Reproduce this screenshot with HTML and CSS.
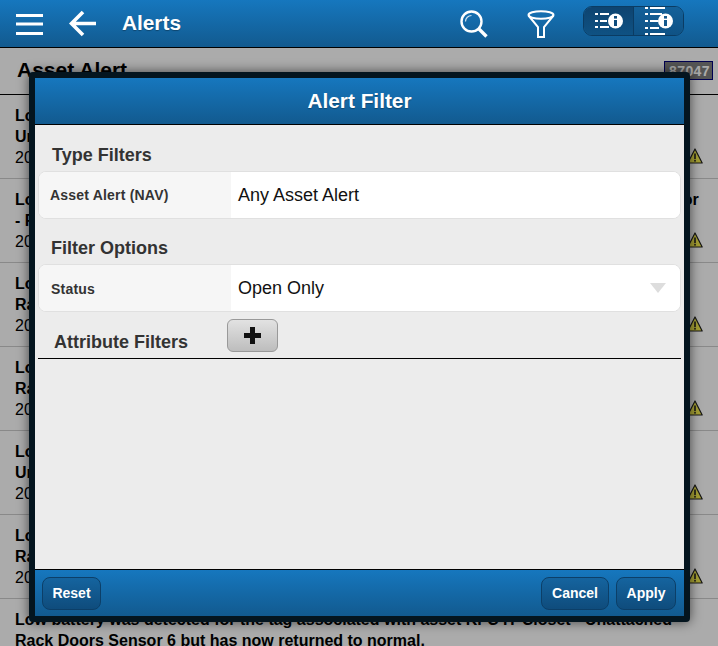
FILE: index.html
```html
<!DOCTYPE html>
<html lang="en">
<head>
    <meta charset="UTF-8">
    <meta name="viewport" content="width=device-width, initial-scale=1.0">
    <title>Alerts</title>
    <link rel="stylesheet" href="styles.css">
</head>
<body>
    <div class="page">
        <header class="top-bar">
            <svg class="icon-menu" width="27" height="21" viewBox="0 0 27 21">
                <rect x="0" y="0" width="27" height="3" fill="#fff"/>
                <rect x="0" y="8.5" width="27" height="3" fill="#fff"/>
                <rect x="0" y="18" width="27" height="3" fill="#fff"/>
            </svg>
            <svg class="icon-back" width="28" height="27" viewBox="0 0 28 27">
                <path d="M27 13.5H4M14 2L2.5 13.5L14 25" fill="none" stroke="#fff" stroke-width="3.6"/>
            </svg>
            <h1 class="page-title">Alerts</h1>
            <svg class="icon-search" width="28" height="28" viewBox="0 0 28 28">
                <circle cx="11.5" cy="11.5" r="10" fill="none" stroke="#fff" stroke-width="2.4"/>
                <path d="M5.5 11.5a6 6 0 0 1 6-6" fill="none" stroke="#cfe2f0" stroke-width="1.2"/>
                <path d="M18.5 18.5L26.5 26.5" stroke="#fff" stroke-width="3.4"/>
            </svg>
            <svg class="icon-funnel" width="28" height="28" viewBox="0 0 28 28">
                <ellipse cx="14" cy="5" rx="12.5" ry="3.8" fill="none" stroke="#fff" stroke-width="2"/>
                <path d="M1.5 5.5L11 17V27H17V17L26.5 5.5" fill="none" stroke="#fff" stroke-width="2"/>
            </svg>
            <div class="view-toggle">
                <div class="view-btn view-btn-active">
                    <svg width="28" height="16" viewBox="0 0 28 16">
                        <g fill="#fff">
                            <rect x="0" y="0" width="3" height="2"/>
                            <rect x="5" y="0" width="9" height="2"/>
                            <rect x="0" y="7" width="3" height="2"/>
                            <rect x="5" y="7" width="7" height="2"/>
                            <rect x="0" y="13" width="3" height="2"/>
                            <rect x="5" y="13" width="9" height="2"/>
                            <circle cx="20.5" cy="8" r="7.5"/>
                        </g>
                        <rect x="19" y="7" width="3" height="6" fill="#0f4c7c"/>
                        <rect x="19" y="3" width="3" height="2.6" fill="#0f4c7c"/>
                    </svg>
                </div>
                <div class="view-btn">
                    <svg width="28" height="30" viewBox="0 0 28 30">
                        <g fill="#fff">
                            <rect x="0" y="1" width="3" height="2"/>
                            <rect x="5" y="1" width="15" height="2"/>
                            <rect x="0" y="7" width="3" height="2"/>
                            <rect x="5" y="7" width="12" height="2"/>
                            <rect x="0" y="14" width="3" height="2"/>
                            <rect x="5" y="14" width="8" height="2"/>
                            <rect x="0" y="21" width="3" height="2"/>
                            <rect x="5" y="21" width="9" height="2"/>
                            <rect x="0" y="27" width="3" height="2"/>
                            <rect x="5" y="27" width="15" height="2"/>
                            <circle cx="20.5" cy="15" r="7.5"/>
                        </g>
                        <rect x="19" y="14" width="3" height="6" fill="#15598d"/>
                        <rect x="19" y="10" width="3" height="2.6" fill="#15598d"/>
                    </svg>
                </div>
            </div>
        </header>

        <div class="content">
            <div class="sub-header">
                <h2>Asset Alert</h2>
                <span class="count-badge">87047</span>
            </div>
            <ul class="alert-list">
                <li class="alert-row">
                    <p class="alert-text">Low battery was detected for the tag associated with asset KFC IT Closet - Unattached<br>Unit Doors Sensor 4 but has now returned to normal.</p>
                    <div class="alert-meta"><span>2019-03-14 08:12:44</span><svg class="icon-warn" width="16" height="16" viewBox="0 0 16 16"><use href="#warn"/></svg></div>
                </li>
                <li class="alert-row">
                    <p class="alert-text">Low battery was detected for the tag associated with asset KFC IT Closet - Garage Sensor<br>- Rack Doors Sensor 2 but has now returned to normal.</p>
                    <div class="alert-meta"><span>2019-03-14 08:09:21</span><svg class="icon-warn" width="16" height="16" viewBox="0 0 16 16"><use href="#warn"/></svg></div>
                </li>
                <li class="alert-row">
                    <p class="alert-text">Low battery was detected for the tag associated with asset KFC IT Closet - Unattached<br>Rack Doors Sensor 3 but has now returned to normal.</p>
                    <div class="alert-meta"><span>2019-03-14 08:05:10</span><svg class="icon-warn" width="16" height="16" viewBox="0 0 16 16"><use href="#warn"/></svg></div>
                </li>
                <li class="alert-row">
                    <p class="alert-text">Low battery was detected for the tag associated with asset KFC IT Closet - Unattached<br>Rack Doors Sensor 4 but has now returned to normal.</p>
                    <div class="alert-meta"><span>2019-03-14 08:01:37</span><svg class="icon-warn" width="16" height="16" viewBox="0 0 16 16"><use href="#warn"/></svg></div>
                </li>
                <li class="alert-row">
                    <p class="alert-text">Low battery was detected for the tag associated with asset KFC IT Closet - Rack Doors<br>Unattached Sensor 5 but has now returned to normal.</p>
                    <div class="alert-meta"><span>2019-03-14 07:58:02</span><svg class="icon-warn" width="16" height="16" viewBox="0 0 16 16"><use href="#warn"/></svg></div>
                </li>
                <li class="alert-row">
                    <p class="alert-text">Low battery was detected for the tag associated with asset KFC IT Closet - Unattached<br>Rack Doors Sensor 5 but has now returned to normal.</p>
                    <div class="alert-meta"><span>2019-03-14 07:55:49</span><svg class="icon-warn" width="16" height="16" viewBox="0 0 16 16"><use href="#warn"/></svg></div>
                </li>
                <li class="alert-row">
                    <p class="alert-text">Low battery was detected for the tag associated with asset KFC IT Closet - Unattached<br>Rack Doors Sensor 6 but has now returned to normal.</p>
                </li>
            </ul>
            <div class="overlay"></div>
        </div>

        <div class="dialog">
            <div class="dialog-header">Alert Filter</div>
            <div class="dialog-body">
                <h3 class="section-title">Type Filters</h3>
                <div class="field-row">
                    <div class="field-label">Asset Alert (NAV)</div>
                    <div class="field-value">Any Asset Alert</div>
                </div>
                <h3 class="section-title section-options">Filter Options</h3>
                <div class="field-row">
                    <div class="field-label field-label-status">Status</div>
                    <div class="field-value field-select">Open Only<span class="caret"></span></div>
                </div>
                <div class="attr-row">
                    <h3 class="section-title attr-title">Attribute Filters</h3>
                    <button class="add-btn" type="button">
                        <svg width="17" height="17" viewBox="0 0 17 17"><path d="M6 0h5v6h6v5h-6v6H6v-6H0V6h6z" fill="#111"/></svg>
                    </button>
                </div>
            </div>
            <div class="dialog-footer">
                <button class="footer-btn footer-reset" type="button">Reset</button>
                <button class="footer-btn footer-cancel" type="button">Cancel</button>
                <button class="footer-btn footer-apply" type="button">Apply</button>
            </div>
        </div>
    </div>

    <svg width="0" height="0" class="defs">
        <symbol id="warn" viewBox="0 0 16 16">
            <path d="M8 1L15.2 15H.8z" fill="#f6ee4e" stroke="#222" stroke-width="1.2" stroke-linejoin="round"/>
            <rect x="7.2" y="5.5" width="1.6" height="5.5" fill="#222"/>
            <rect x="7.2" y="11.8" width="1.6" height="1.8" fill="#222"/>
        </symbol>
    </svg>
</body>
</html>
```

FILE: styles.css
```css
html, body {
    margin: 0;
    padding: 0;
    height: 100%;
    overflow: hidden;
}

body {
    font-family: "Liberation Sans", Arial, sans-serif;
    background-color: #fff;
    color: #000;
}

.defs {
    display: block;
    height: 0;
}

.page {
    position: relative;
    height: 100vh;
    overflow: hidden;
    display: flex;
    flex-direction: column;
}

/* top bar */
.top-bar {
    flex: none;
    height: 47px;
    display: flex;
    align-items: center;
    background: linear-gradient(#1677be, #125a8f);
    border-bottom: 1px solid #000;
}

.top-bar svg {
    flex: none;
}

.icon-menu {
    margin-left: 16px;
    margin-top: 1px;
}

.icon-back {
    margin-left: 26px;
}

.page-title {
    margin: 0 0 2px 25px;
    flex: 1;
    font-size: 20.8px;
    font-weight: bold;
    color: #fff;
    text-shadow: 0 1px 1px rgba(0, 0, 0, 0.3);
}

.icon-funnel {
    margin-left: 39px;
}

.view-toggle {
    display: flex;
    flex: none;
    margin-left: 28px;
    margin-right: 34px;
    height: 28px;
    border: 1px solid #0b3c63;
    border-radius: 9px;
    overflow: hidden;
    margin-top: -5px;
}

.view-btn {
    width: 49px;
    display: flex;
    align-items: center;
    justify-content: center;
    background: linear-gradient(#14619a, #0f5285);
}

.view-btn-active {
    border-right: 1px solid #0b3c63;
    background: linear-gradient(#0e4470, #0f5283);
}

/* list behind the dialog */
.content {
    position: relative;
    flex: 1;
    overflow: hidden;
}

.sub-header {
    height: 46px;
    display: flex;
    align-items: center;
    justify-content: space-between;
    padding: 0 5px 0 17px;
    border-bottom: 1px solid #000;
}

.sub-header h2 {
    margin: 0 0 2px;
    font-size: 21px;
    font-weight: bold;
}

.count-badge {
    align-self: flex-start;
    margin-top: 13px;
    padding: 0 2px 0 4px;
    height: 17px;
    line-height: 19px;
    font-size: 14px;
    font-weight: bold;
    letter-spacing: 0.4px;
    color: #fff;
    background-color: #7f7f7f;
    border: 1px solid #00007a;
}

.alert-list {
    list-style: none;
    margin: 0;
    padding: 0;
}

.alert-row {
    padding: 10px 15px 0;
    height: 73px;
    border-bottom: 1px solid #ccc;
    font-size: 16px;
    line-height: 21px;
}

.alert-text {
    margin: 0;
    font-weight: bold;
    white-space: nowrap;
}

.alert-meta {
    display: flex;
    justify-content: space-between;
    align-items: center;
}

.icon-warn {
    margin-top: -3px;
}

.overlay {
    position: absolute;
    top: 0;
    right: 0;
    bottom: 0;
    left: 0;
    background-color: rgba(0, 0, 0, 0.33);
}

/* dialog */
.dialog {
    position: absolute;
    left: 29px;
    top: 72px;
    width: 649px;
    height: 538px;
    display: flex;
    flex-direction: column;
    border: 6px solid #04151f;
    border-radius: 4px;
    box-shadow: 0 0 12px rgba(0, 0, 0, 0.6);
    background-color: #ececec;
}

.dialog-header {
    flex: none;
    height: 46px;
    line-height: 46px;
    text-align: center;
    font-size: 20.8px;
    font-weight: bold;
    color: #fff;
    text-shadow: 0 1px 1px rgba(0, 0, 0, 0.3);
    background: linear-gradient(#1677be, #125a8f);
    border-bottom: 1px solid #000;
}

.dialog-body {
    flex: 1;
    padding: 19px 3px 0;
}

.section-title {
    margin: 0;
    font-size: 18px;
    line-height: 22px;
    font-weight: bold;
    color: #333;
    padding-left: 14px;
}

.section-options {
    margin-top: 18px;
    padding-left: 13px;
}

.field-row {
    display: grid;
    grid-template-columns: 192px 1fr;
    height: 46px;
    margin-top: 5px;
    border: 1px solid #e0e0e0;
    border-radius: 8px;
    overflow: hidden;
    background-color: #fff;
}

.field-label {
    display: flex;
    align-items: center;
    padding-left: 11px;
    font-size: 14px;
    font-weight: bold;
    letter-spacing: 0.2px;
    color: #333;
    background-color: #f6f6f6;
}

.field-label-status {
    padding: 1px 0 0 12px;
}

.field-value {
    display: flex;
    align-items: center;
    justify-content: space-between;
    padding-left: 7px;
    font-size: 18px;
    color: #111;
    background-color: #fff;
}

.caret {
    width: 0;
    height: 0;
    margin-right: 14px;
    border-left: 8px solid transparent;
    border-right: 8px solid transparent;
    border-top: 10px solid #ddd;
}

.attr-row {
    display: flex;
    align-items: flex-end;
    height: 46px;
    border-bottom: 1px solid #000;
}

.attr-title {
    width: 173px;
    padding-left: 16px;
    margin-bottom: 5px;
}

.add-btn {
    width: 51px;
    height: 33px;
    margin-bottom: 6px;
    padding: 0;
    display: flex;
    align-items: center;
    justify-content: center;
    border: 1px solid #999;
    border-radius: 6px;
    background: linear-gradient(#e2e2e2, #bdbdbd);
}

.dialog-footer {
    flex: none;
    height: 47px;
    display: flex;
    align-items: center;
    padding: 0 8px 0 7px;
    background: linear-gradient(#1677be, #125a8f);
    border-top: 1px solid #000;
    box-sizing: border-box;
}

.footer-btn {
    height: 33px;
    padding: 0;
    font-family: "Liberation Sans", Arial, sans-serif;
    font-size: 14px;
    font-weight: bold;
    color: #fff;
    border: 1px solid #0c3f68;
    border-radius: 8px;
    background: linear-gradient(#15649f, #0f4c7c);
}

.footer-reset {
    width: 59px;
    margin-right: auto;
}

.footer-cancel {
    width: 68px;
    margin-right: 7px;
}

.footer-apply {
    width: 60px;
}
```
